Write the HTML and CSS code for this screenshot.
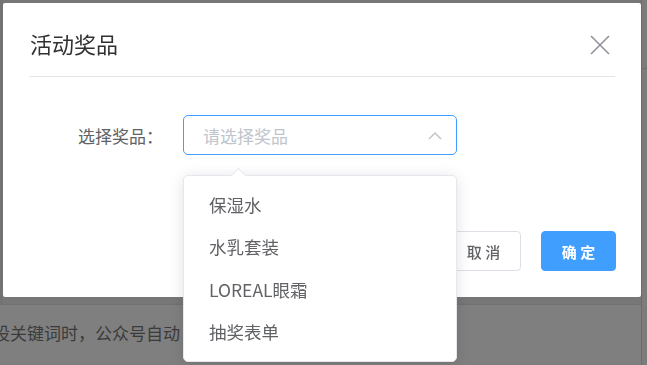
FILE: index.html
```html
<!DOCTYPE html>
<html lang="zh-CN">
<head>
    <meta charset="UTF-8">
    <meta name="viewport" content="width=device-width, initial-scale=1.0">
    <title>活动奖品</title>
<link rel="stylesheet" href="styles.css">
</head>
<body>
    <div class="page">
        <div class="page-main">
            <div class="page-head"></div>
            <div class="page-row">设关键词时，公众号自动</div>
        </div>
        <div class="page-side"></div>
    </div>

    <div class="mask"></div>

    <div class="dialog">
        <div class="dialog-header">
            <span class="dialog-title">活动奖品</span>
            <button class="dialog-close" aria-label="Close">
                <svg width="20" height="20" viewBox="0 0 20 20">
                    <path d="M1 1 L19 19 M19 1 L1 19" stroke="#909399" stroke-width="1.6" fill="none"/>
                </svg>
            </button>
        </div>
        <div class="dialog-body">
            <div class="form-item">
                <label class="form-label">选择奖品：</label>
                <div class="select">
                    <span class="placeholder">请选择奖品</span>
                    <svg class="select-arrow" width="14" height="9" viewBox="0 0 14 9">
                        <path d="M1 8 L7 2 L13 8" stroke="#c0c4cc" stroke-width="1.5" fill="none"/>
                    </svg>
                </div>
            </div>
        </div>
        <div class="dialog-footer">
            <button class="btn">取 消</button>
            <button class="btn btn-primary">确 定</button>
        </div>
    </div>

    <div class="dropdown">
        <span class="dropdown-arrow"></span>
        <ul class="dropdown-list">
            <li>保湿水</li>
            <li>水乳套装</li>
            <li>LOREAL眼霜</li>
            <li>抽奖表单</li>
        </ul>
    </div>
</body>
</html>
```

FILE: styles.css
```css
    body {
        font-family: "Noto Sans CJK SC", "Noto Sans", sans-serif;
        margin: 0;
        padding: 0;
        width: 647px;
        height: 365px;
        overflow: hidden;
        background-color: #fff;
    }
    .page {
        display: flex;
        height: 365px;
    }
    .page-main {
        flex: 1;
        display: flex;
        flex-direction: column;
    }
    .page-head {
        height: 305px;
        background-color: #eeeeee;
        border-left: 3px solid #e6e6e6;
        box-sizing: border-box;
        background-image: linear-gradient(#dcdcdc, #dcdcdc);
        background-size: 100% 1px;
        background-position: 0 68px;
        background-repeat: no-repeat;
        border-bottom: 1px solid #e2e2e2;
    }
    .page-row {
        padding-top: 16px;
        line-height: 24px;
        font-size: 17px;
        color: #777;
        margin-left: -7px;
        white-space: nowrap;
        background-color: #fff;
        flex: 1;
    }
    .page-side {
        width: 5px;
        border-left: 1px solid #d8d8d8;
        background-color: #f8f8f8;
        background-image: linear-gradient(#d8d8d8, #d8d8d8);
        background-size: 100% 1px;
        background-position: 0 68px;
        background-repeat: no-repeat;
    }
    .mask {
        position: fixed;
        inset: 0;
        background-color: rgba(0, 0, 0, 0.5);
    }
    .dialog {
        position: absolute;
        left: 3px;
        top: 3px;
        width: 638px;
        height: 294px;
        background-color: #fff;
        border-radius: 2px;
        display: flex;
        flex-direction: column;
    }
    .dialog-header {
        position: relative;
        margin: 0 26px;
        padding: 25px 0 18px;
        border-bottom: 1px solid #e4e4e4;
    }
    .dialog-title {
        display: block;
        font-size: 22px;
        line-height: 30px;
        color: #303133;
        margin-left: 1px;
    }
    .dialog-close {
        position: absolute;
        top: 32px;
        right: 5px;
        width: 20px;
        height: 20px;
        padding: 0;
        border: none;
        background: none;
    }
    .dialog-close svg {
        display: block;
    }
    .dialog-body {
        padding: 38px 26px 0;
    }
    .form-item {
        display: flex;
        align-items: center;
    }
    .form-label {
        width: 154px;
        box-sizing: border-box;
        padding-right: 20px;
        text-align: right;
        font-size: 17px;
        color: #606266;
    }
    .select {
        width: 274px;
        height: 40px;
        box-sizing: border-box;
        border: 1px solid #409eff;
        border-radius: 5px;
        padding: 0 14px 0 19px;
        display: flex;
        align-items: center;
        justify-content: space-between;
    }
    .placeholder {
        font-size: 17px;
        color: #c0c4cc;
    }
    .dialog-footer {
        display: flex;
        justify-content: flex-end;
        gap: 20px;
        padding: 76px 25px 0;
    }
    .btn {
        width: 75px;
        height: 40px;
        font-family: inherit;
        font-size: 15px;
        font-weight: 500;
        color: #606266;
        background-color: #fff;
        border: 1px solid #dcdfe6;
        border-radius: 4px;
        padding: 0;
    }
    .btn-primary {
        color: #fff;
        background-color: #409eff;
        border-color: #409eff;
        font-weight: 700;
    }
    .dropdown {
        position: absolute;
        left: 183px;
        top: 175px;
        width: 274px;
        box-sizing: border-box;
        background-color: #fff;
        border: 1px solid #e4e7ed;
        border-radius: 5px;
        box-shadow: 0 2px 15px rgba(0, 0, 0, 0.12);
    }
    .dropdown-arrow {
        position: absolute;
        left: 49px;
        top: -6px;
        width: 10px;
        height: 10px;
        background-color: #fff;
        border-left: 1px solid #e4e7ed;
        border-top: 1px solid #e4e7ed;
        transform: rotate(45deg);
    }
    .dropdown-list {
        list-style: none;
        margin: 0;
        padding: 7.5px 0;
        position: relative;
    }
    .dropdown-list li {
        height: 42.5px;
        line-height: 42.5px;
        padding: 0 25px;
        font-size: 17.5px;
        color: #606266;
    }
```
